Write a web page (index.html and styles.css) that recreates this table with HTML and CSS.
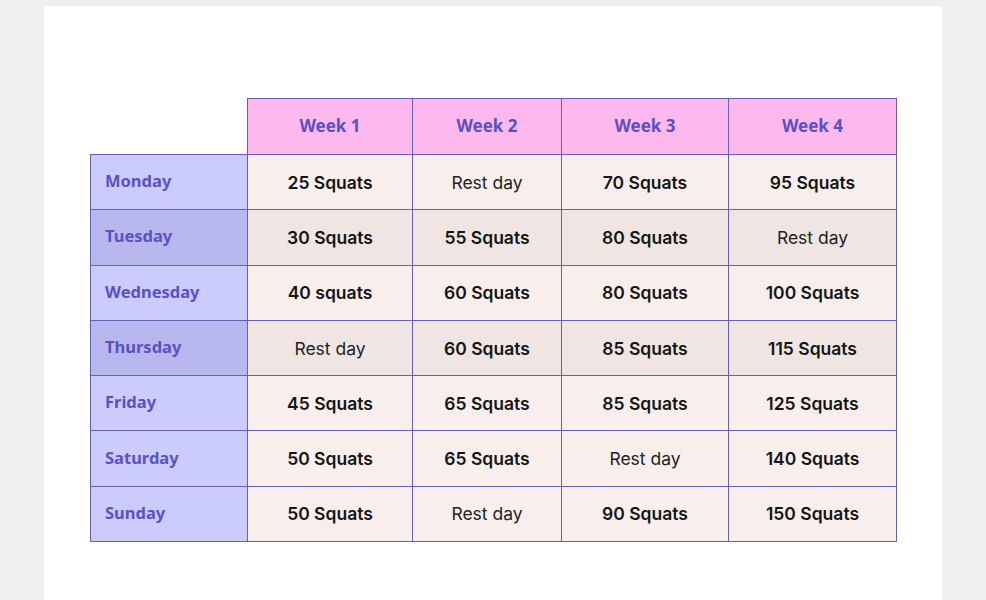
FILE: index.html
```html
<!DOCTYPE html>
<html lang="en">
<head>
  <meta charset="UTF-8" />
  <meta name="viewport" content="width=device-width, initial-scale=1" />
  <title>Squat Challenge</title>
  <link rel="stylesheet" href="styles.css">
</head>
<body>
  <div class="sheet">
    <table class="plan">
      <colgroup>
        <col class="col-day" />
        <col class="col-w1" />
        <col class="col-w2" />
        <col class="col-w3" />
        <col class="col-w4" />
      </colgroup>
      <thead>
        <tr>
          <th class="blank"></th>
          <th>Week 1</th>
          <th>Week 2</th>
          <th>Week 3</th>
          <th>Week 4</th>
        </tr>
      </thead>
      <tbody>
        <tr>
          <td class="day">Monday</td>
          <td class="reps">25 Squats</td>
          <td class="rest">Rest day</td>
          <td class="reps">70 Squats</td>
          <td class="reps">95 Squats</td>
        </tr>
        <tr class="shade">
          <td class="day">Tuesday</td>
          <td class="reps">30 Squats</td>
          <td class="reps">55 Squats</td>
          <td class="reps">80 Squats</td>
          <td class="rest">Rest day</td>
        </tr>
        <tr>
          <td class="day">Wednesday</td>
          <td class="reps">40 squats</td>
          <td class="reps">60 Squats</td>
          <td class="reps">80 Squats</td>
          <td class="reps">100 Squats</td>
        </tr>
        <tr class="shade">
          <td class="day">Thursday</td>
          <td class="rest">Rest day</td>
          <td class="reps">60 Squats</td>
          <td class="reps">85 Squats</td>
          <td class="reps">115 Squats</td>
        </tr>
        <tr>
          <td class="day">Friday</td>
          <td class="reps">45 Squats</td>
          <td class="reps">65 Squats</td>
          <td class="reps">85 Squats</td>
          <td class="reps">125 Squats</td>
        </tr>
        <tr>
          <td class="day">Saturday</td>
          <td class="reps">50 Squats</td>
          <td class="reps">65 Squats</td>
          <td class="rest">Rest day</td>
          <td class="reps">140 Squats</td>
        </tr>
        <tr>
          <td class="day">Sunday</td>
          <td class="reps">50 Squats</td>
          <td class="rest">Rest day</td>
          <td class="reps">90 Squats</td>
          <td class="reps">150 Squats</td>
        </tr>
      </tbody>
    </table>
  </div>
</body>
</html>
```

FILE: styles.css
```css
body {
  margin: 0;
  background: #efeff1;
  font-family: 'Noto Sans', sans-serif;
  height: 600px;
  overflow: hidden;
}
.sheet {
  background: #ffffff;
  margin: 6px 44px 0 44px;
  padding: 92px 0 0 46px;
  height: 594px;
  box-sizing: border-box;
}
.plan {
  border-collapse: collapse;
  table-layout: fixed;
  width: 807px;
}
.col-day { width: 157px; }
.col-w1 { width: 165px; }
.col-w2 { width: 149px; }
.col-w3 { width: 167px; }
.col-w4 { width: 168px; }
.plan th,
.plan td {
  border: 1px solid #6660b4;
  height: 54.3px;
  padding: 0;
  text-align: center;
}
.plan th {
  background: #fdb9ee;
  color: #5a4fc3;
  font-weight: 700;
  font-size: 17px;
  height: 53px;
  padding-bottom: 2px;
}
.plan th.blank {
  background: transparent;
  border: none;
  border-bottom: 1px solid #6660b4;
}
.plan td.day {
  background: #cbcbfc;
  color: #5a52c4;
  font-weight: 700;
  font-size: 16.5px;
  text-align: left;
  height: 51.3px;
  padding: 0 0 3px 14px;
}
.reps,
.rest {
  background: #f8efed;
  color: #151515;
  font-family: 'Inter', 'Noto Sans', sans-serif;
  font-size: 17.5px;
}
.reps {
  font-weight: 600;
}
.rest {
  font-weight: 400;
  color: #222;
}
.plan .shade td.day {
  background: #b8b8ef;
}
.shade .reps,
.shade .rest {
  background: #efe6e3;
}
```
